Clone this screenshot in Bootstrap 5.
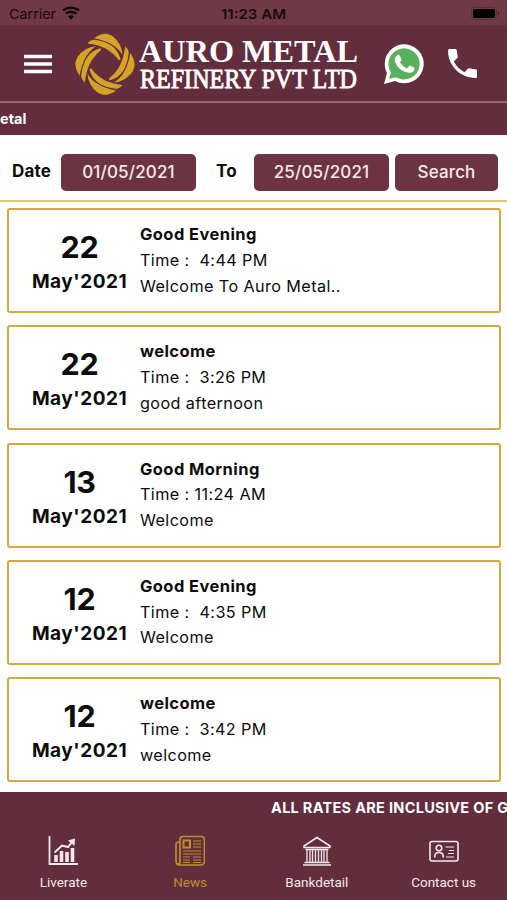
<!DOCTYPE html>
<html lang="en">
<head>
<meta charset="utf-8">
<meta name="viewport" content="width=device-width, initial-scale=1">
<title>Auro Metal Refinery</title>
<link href="https://cdn.jsdelivr.net/npm/bootstrap@5.3.0/dist/css/bootstrap.min.css" rel="stylesheet">
<style>
:root{--wine:#622d3d;--gold:#d4aa3e}
body{font-family:Inter,"Liberation Sans",sans-serif;color:#0c0c0c;height:900px;overflow:hidden;background:#fff}
.wine{background:var(--wine);color:#fff}
.status-strip{height:26px;background:#713944;color:#1b0b10;font-size:13.5px;padding:1px 7px 0 9px;border-bottom:1px solid #66303d}
.app-head{height:77px;border-bottom:2px solid #92686f}
.menu-btn{width:28px;margin-left:24px}
.brand-logo{margin-left:22px}
.wa{margin-left:22px}
.phone{margin-left:24px}
.news-strip{height:32px;font-size:14.5px;font-weight:700;line-height:31px}
.filters{height:67px;border-bottom:2px solid #e5c670;padding:9px 9px 0 12px;font-size:17px;font-weight:700;letter-spacing:.2px}
.filters .btn{background:#6c3441;color:#f7e9ea;font-size:17px;font-weight:500;height:37px;padding:1px 0 0;border:0;border-radius:5px;letter-spacing:.15px}
.btn-date{width:135px}.btn-find{width:103px}
.lbl-date{width:49px}.lbl-to{width:58px;padding-left:20px}
.news-list{height:590px;padding:6px 6px 0 7px;gap:12.3px}
.news-item{height:105px;border:2px solid var(--gold);border-radius:3px;flex:none}
.day-col{width:141px;font-weight:700;padding-top:18px}
.day-num{font-size:30.5px;line-height:38px;letter-spacing:-.3px}
.day-month{font-size:19px;line-height:32px;letter-spacing:.5px}
.detail{font-size:16.2px;line-height:25.8px;padding-top:12px;letter-spacing:.4px;margin-left:-10px;white-space:pre}
.detail strong{font-weight:700;font-size:16.5px;letter-spacing:.42px}
.ticker{height:31px;padding-left:271px;font-size:14.5px;font-weight:700;line-height:31px;letter-spacing:.3px}
.tabs-bar{height:77px;font-family:Roboto,sans-serif;font-size:13.5px}
.tab-link{color:#f6e8ec;padding-top:12px;text-decoration:none}
.tab-link.on{color:#be8e2b}
.tab-link svg{margin-bottom:5px}
svg{display:block;flex:none}
</style>
</head>
<body class="d-flex flex-column">
<div class="status-strip d-flex align-items-center justify-content-between flex-shrink-0">
  <svg width="484" height="24" viewBox="9 0 484 24" font-family="Inter" font-size="13.5" fill="#180a0e">
    <text x="9" y="17.500" textLength="47" lengthAdjust="spacingAndGlyphs">Carrier</text>
    <g fill="none" stroke="#0b0507" stroke-width="2.4"><path d="M63 9.300q8-5.400 16 0M65.700 12.500q5.300-3.600 10.600 0"/></g><path d="M68 15.200q3-2 6 0l-3 3.500z" fill="#0b0507"/>
    <text x="221" y="17.500" font-weight="600" textLength="65" lengthAdjust="spacingAndGlyphs">11:23 AM</text>
    <rect x="471.500" y="6.500" width="24" height="12" rx="3.500" fill="none" stroke="#553038"/><rect x="473" y="8" width="22" height="9" rx="2" fill="#000"/>
  </svg>
  <svg class="ms-auto" width="7" height="12" viewBox="493 6 7 12"><path d="M493 8q2 0 2 2v5q0 2-2 2z" fill="#000"/><path d="M493 6.500q3.500 0 3.500 3.500v5q0 3.500-3.500 3.500" fill="none" stroke="#553038"/><path d="M498 10.500q2 2 0 4z" fill="#35191f"/></svg>
</div>
<header class="app-head wine d-flex align-items-center flex-shrink-0">
  <svg class="menu-btn" width="28" height="20" viewBox="0 0 28 20" fill="#fff"><path d="M0 .7h28v3.600H0zM0 8.200h28v3.600H0zM0 15.700h28v3.600H0z"/></svg>
  <svg class="brand-logo" width="288" height="68" viewBox="74 29 288 68">
    <defs><g id="blade"><path d="M-34-78Q-12-93 6-91L22-85Q52-62 54-28Q30-67-34-78Z"/><path d="M-54-62Q-44-74-32-73C14-67 40-48 48-14L43-12C15-46-10-56-54-62Z"/></g></defs>
    <g fill="#d5a426" transform="translate(105 63.300) scale(.325 .335)"><use href="#blade"/><use href="#blade" transform="rotate(90)"/><use href="#blade" transform="rotate(180)"/><use href="#blade" transform="rotate(270)"/></g>
    <g fill="#fff" stroke="#fff" font-family="Liberation Serif,serif">
      <text x="139" y="61" font-size="32" font-weight="700" stroke-width="0" textLength="219" lengthAdjust="spacingAndGlyphs">AURO METAL</text>
      <text x="140" y="87" font-size="27.500" stroke-width=".9" textLength="217" lengthAdjust="spacingAndGlyphs">REFINERY PVT LTD</text>
    </g>
  </svg>
  <svg class="wa" width="40" height="40" viewBox="0 0 40 40"><path d="M0 40L3 29A19.500 19.500 0 1 1 11 37Z" fill="#fff"/><path d="M5 35L7 28.500A15.600 15.600 0 1 1 12 33.300Z" fill="#58b05b"/><path d="M13 11.500q2-1.600 3 .5l1.400 3.300q.4 1-1.400 2.900 2.300 4.400 6.800 6.300l2.300-2.600q.6-.5 1.400-.1l3.400 1.700q1 .5.4 2.200-1.500 3.600-6 3.100-10-2-13.500-11.300-.8-3.700 2.200-6z" fill="#fff"/></svg>
  <svg class="phone" width="29" height="29" viewBox="3 3 18 18" fill="#fff"><path d="M6.620 10.790c1.440 2.830 3.760 5.140 6.590 6.590l2.200-2.200c.27-.27.670-.36 1.020-.24 1.120.37 2.330.57 3.570.57.550 0 1 .45 1 1V20c0 .55-.45 1-1 1-9.390 0-17-7.610-17-17 0-.55.450-1 1-1h3.500c.550 0 1 .45 1 1 0 1.250.200 2.450.570 3.570.110.350.030.740-.250 1.020z"/></svg>
</header>
<div class="news-strip wine flex-shrink-0">etal</div>
<div class="filters d-flex align-items-center flex-shrink-0">
  <span class="lbl-date">Date</span><button class="btn btn-date">01/05/2021</button>
  <span class="lbl-to">To</span><button class="btn btn-date">25/05/2021</button>
  <button class="btn btn-find ms-auto">Search</button>
</div>
<main class="news-list d-flex flex-column flex-shrink-0">
  <article class="news-item d-flex"><div class="day-col text-center"><div class="day-num">22</div><div class="day-month">May'2021</div></div><div class="detail"><strong>Good Evening</strong><div>Time :  4:44 PM</div><div>Welcome To Auro Metal..</div></div></article>
  <article class="news-item d-flex"><div class="day-col text-center"><div class="day-num">22</div><div class="day-month">May'2021</div></div><div class="detail"><strong>welcome</strong><div>Time :  3:26 PM</div><div>good afternoon</div></div></article>
  <article class="news-item d-flex"><div class="day-col text-center"><div class="day-num">13</div><div class="day-month">May'2021</div></div><div class="detail"><strong>Good Morning</strong><div>Time : 11:24 AM</div><div>Welcome</div></div></article>
  <article class="news-item d-flex"><div class="day-col text-center"><div class="day-num">12</div><div class="day-month">May'2021</div></div><div class="detail"><strong>Good Evening</strong><div>Time :  4:35 PM</div><div>Welcome</div></div></article>
  <article class="news-item d-flex"><div class="day-col text-center"><div class="day-num">12</div><div class="day-month">May'2021</div></div><div class="detail"><strong>welcome</strong><div>Time :  3:42 PM</div><div>welcome</div></div></article>
</main>
<div class="ticker wine flex-shrink-0 text-nowrap overflow-hidden">ALL RATES ARE INCLUSIVE OF GST</div>
<nav class="tabs-bar wine row g-0 flex-shrink-0">
  <a class="tab-link col d-flex flex-column align-items-center">
    <svg width="30" height="32" viewBox="0 0 30 32" fill="none" stroke="currentColor"><path d="M1.500 1v28H30" stroke-width="1.800"/><path d="M8 20v7M13.500 16v11M19 17v10M24.500 13v14" stroke-width="3.600"/><path d="M6.500 17.500L14 10.500L20 12L24 7" stroke-width="2"/><path d="M20 5.500L27 3.500L26.500 11Z" fill="currentColor" stroke="none"/></svg>Liverate</a>
  <a class="tab-link on col d-flex flex-column align-items-center">
    <svg width="30" height="32" viewBox="0 0 30 32" fill="none" stroke="currentColor" stroke-width="1.700"><path d="M5 7H3.500Q1 7 1 10v16q0 4 4 4h21q3.500 0 3.500-4V5q0-3.500-3.500-3.500H8Q5 1.500 5 5v21q0 3-2 3"/><path d="M8.500 5.500h6.500v7H8.500z" stroke-width="2"/><path d="M18 6h8M18 9h8M18 12h8M8 16h18M8 19h18M8 22h7M8 25h7M8 27.500h7M18 22h8M18 25h8M18 27.500h8" stroke-width="1"/></svg>News</a>
  <a class="tab-link col d-flex flex-column align-items-center">
    <svg width="30" height="32" viewBox="0 0 30 32" fill="none" stroke="currentColor" stroke-width="1.500"><path d="M2 11L15 2.500L28 11v1.500H2zM3.500 14.500h23M2.500 27.500h25M1 30h28"/><path d="M5 14v13M8 14v13M10.500 14v13M13.500 14v13M16.500 14v13M19.500 14v13M22 14v13M25 14v13" stroke-width="1.300"/></svg>Bankdetail</a>
  <a class="tab-link col d-flex flex-column align-items-center">
    <svg width="30" height="32" viewBox="0 0 30 32" fill="none" stroke="currentColor" stroke-width="1.600"><rect x="1" y="6.500" width="28" height="19.500" rx="2"/><circle cx="10" cy="13" r="2.800"/><path d="M5.800 22.500v-1q0-4 4.200-4t4.200 4v1"/><path d="M16.500 12h8.500M20 15.500h5M19 18.500h6M17 22h8" stroke-width="1.200"/></svg>Contact us</a>
</nav>
<script src="https://cdn.jsdelivr.net/npm/bootstrap@5.3.0/dist/js/bootstrap.bundle.min.js"></script>
</body>
</html>
